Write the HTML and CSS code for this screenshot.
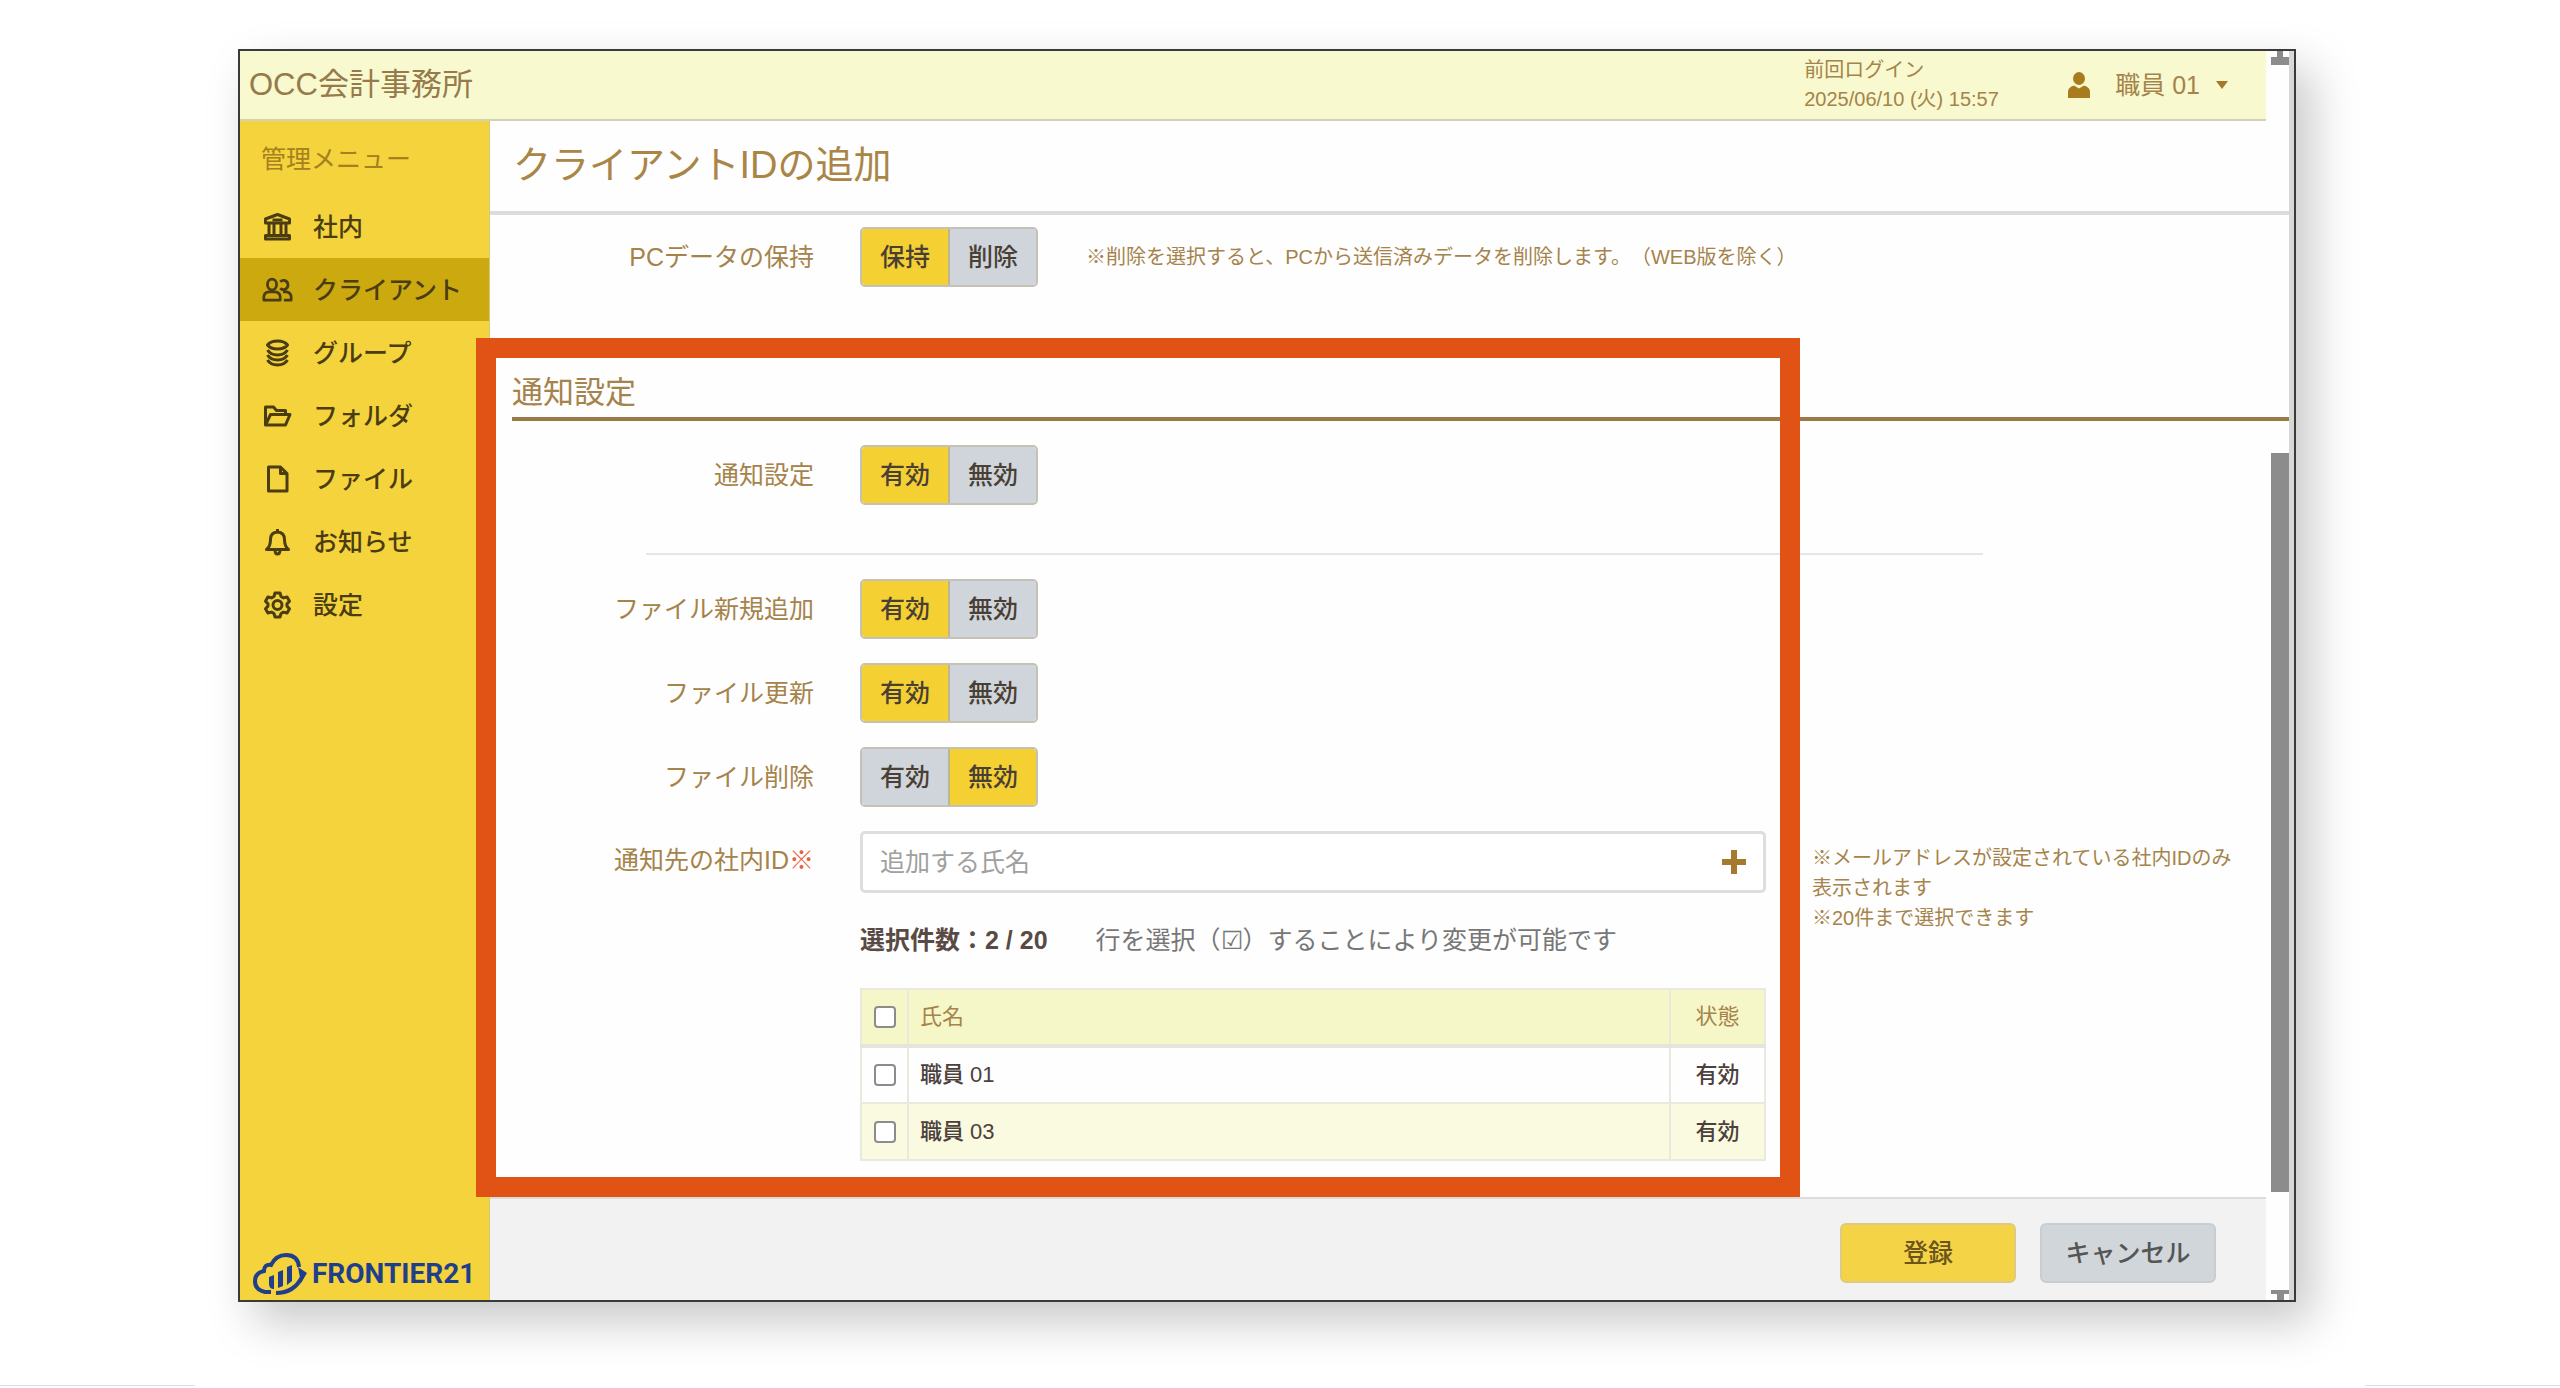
FILE: index.html
```html
<!DOCTYPE html>
<html lang="ja">
<head>
<meta charset="utf-8">
<meta name="viewport" content="width=device-width, initial-scale=1">
<title>クライアントIDの追加</title>
<link rel="stylesheet" href="styles.css">
</head>
<body>
<div class="figure">
<div class="window">
  <header class="topbar">
    <div class="office">OCC会計事務所</div>
    <div class="last-login">前回ログイン<br>2025/06/10 (火) 15:57</div>
    <button type="button" class="user">
      <svg class="user-icon" viewBox="0 0 24 26"><ellipse cx="12" cy="6.500" rx="6" ry="6.500"/><path d="M1 26v-6q0-5 6-6.500l5 3 5-3q6 1.500 6 6.500v6z"/></svg>
      <span>職員 01</span>
      <svg class="caret" viewBox="0 0 12 8"><path d="M0 0h12L6 8z"/></svg>
    </button>
  </header>
  <div class="body">
    <nav class="sidebar">
      <h2 class="menu-title">管理メニュー</h2>
      <ul class="menu">
        <li><a href="#" class="item"><svg viewBox="0 0 28 28"><path d="M14 1.500 26 6v4H2V6zM5.500 11v11M10.500 11v11M17.500 11v11M22.500 11v11M2 22.500h24v3.500H2z"/><path d="M9 7h10"/></svg>社内</a></li>
        <li><a href="#" class="item current"><svg viewBox="0 0 34 28"><ellipse cx="11" cy="8" rx="5" ry="6"/><path d="M2 25v-3q0-5 5-6h8q5 1 5 6v3zM20 5q2-2 4.500-1.500 4 1 4 5t-4 5q-2.500.5-4.500-1.500M24 25h8v-3q0-5-5-6h-4"/></svg>クライアント</a></li>
        <li><a href="#" class="item"><svg viewBox="0 0 28 28"><path d="M14 2q7 0 10 4-3 4-10 4T4 6q3-4 10-4zM4 11q3 5 10 5t10-5M4 16q3 5 10 5t10-5M4 21q3 5 10 5t10-5"/></svg>グループ</a></li>
        <li><a href="#" class="item"><svg viewBox="0 0 28 28"><path d="M2 23V5h8l3 3.500h9v4M2 23l5-10.500h19.500L22 23z"/></svg>フォルダ</a></li>
        <li><a href="#" class="item"><svg viewBox="0 0 28 28"><path d="M5 2h12l6.500 6.500V26H5zM17 2v6.500h6.500"/></svg>ファイル</a></li>
        <li><a href="#" class="item"><svg viewBox="0 0 28 28"><path d="M14 1v3M3 21.500q4-3 4-10 0-7 7-7.500 7 .5 7 7.500 0 7 4 10zM11.500 22q0 4 2.500 4t2.500-4"/></svg>お知らせ</a></li>
        <li><a href="#" class="item"><svg viewBox="0 0 28 28"><path d="M11.500 2h5l1 3.500 2.500 1.400 3.600-.9 2.400 4.300-2.500 2.600v2.200l2.500 2.600-2.400 4.300-3.600-.9-2.500 1.400-1 3.500h-5l-1-3.500-2.500-1.400-3.600.9L2 17.700l2.500-2.600v-2.200L2 10.300 4.400 6l3.600.9 2.500-1.400z"/><circle cx="14" cy="14" r="4.500"/></svg>設定</a></li>
      </ul>
      <a href="#" class="brand">
        <svg viewBox="0 0 54 42"><path class="line" d="M18 39H12Q2 37 2 28q0-8 9-10 0-7 7-6Q23 2 33 2q12 0 13 12"/><path class="line" d="M23 40q18 0 26-16"/><path d="m45 14 9 6-6 10zM16 24l5-2v14q-5 0-5-5zM25 19l5-2v16l-5 2zM34 14l5-2v16l-5 4z"/></svg>
        <span>FRONTIER21</span>
      </a>
    </nav>
    <main class="main">
      <h1 class="title">クライアントIDの追加</h1>
      <form class="form">
        <div class="row data-row">
          <span class="label">PCデータの保持</span>
          <div class="control inline">
            <div class="toggle"><button type="button" class="on">保持</button><button type="button">削除</button></div>
            <p class="note">※削除を選択すると、PCから送信済みデータを削除します。（WEB版を除く）</p>
          </div>
        </div>
        <section class="notify">
          <h2 class="section-title">通知設定</h2>
          <div class="row">
            <span class="label">通知設定</span>
            <div class="toggle"><button type="button" class="on">有効</button><button type="button">無効</button></div>
          </div>
          <hr class="rule">
          <div class="row">
            <span class="label">ファイル新規追加</span>
            <div class="toggle"><button type="button" class="on">有効</button><button type="button">無効</button></div>
          </div>
          <div class="row">
            <span class="label">ファイル更新</span>
            <div class="toggle"><button type="button" class="on">有効</button><button type="button">無効</button></div>
          </div>
          <div class="row">
            <span class="label">ファイル削除</span>
            <div class="toggle"><button type="button">有効</button><button type="button" class="on">無効</button></div>
          </div>
          <div class="row top">
            <label class="label tall" for="staff">通知先の社内ID<span class="required">※</span></label>
            <div class="control">
              <div class="picker">
                <input id="staff" type="text" placeholder="追加する氏名">
                <button type="button" class="add" aria-label="追加"><svg viewBox="0 0 24 24"><path d="M9 0h6v9h9v6h-9v9H9v-9H0V9h9z"/></svg></button>
              </div>
              <p class="summary"><strong>選択件数：2 / 20</strong><span>行を選択（☑）することにより変更が可能です</span></p>
              <table class="staff">
                <thead><tr><th class="check"><input type="checkbox" aria-label="すべて選択"></th><th>氏名</th><th class="state">状態</th></tr></thead>
                <tbody>
                  <tr><td class="check"><input type="checkbox" aria-label="職員 01"></td><td>職員 01</td><td class="state">有効</td></tr>
                  <tr><td class="check"><input type="checkbox" aria-label="職員 03"></td><td>職員 03</td><td class="state">有効</td></tr>
                </tbody>
              </table>
            </div>
            <p class="note side">※メールアドレスが設定されている社内IDのみ<br>表示されます<br>※20件まで選択できます</p>
          </div>
          <div class="highlight"></div>
        </section>
      </form>
      <footer class="actions">
        <button type="submit" class="btn primary">登録</button>
        <button type="button" class="btn">キャンセル</button>
      </footer>
    </main>
  </div>
  <div class="scrollbar">
    <svg class="arrow" viewBox="0 0 18 14"><path d="M6 0h6v6h6v8H0V6h6z"/></svg>
    <div class="track"><div class="thumb"></div></div>
    <svg class="arrow down" viewBox="0 0 18 10"><path d="M0 0h18v4h-5v6H6V4H0z"/></svg>
  </div>
</div>
</div>
</body>
</html>
```
FILE: styles.css
```css
* { box-sizing: border-box; }

body {
  margin: 0;
  background: #fff;
  color: #a5834a;
  font-family: "Liberation Sans", "Noto Sans CJK JP", sans-serif;
  font-size: 25px;
  line-height: 36px;
  text-spacing-trim: space-all;
}

h1, h2, p, ul { margin: 0; padding: 0; font-weight: 400; }
ul { list-style: none; }
button, input { font: inherit; color: inherit; margin: 0; padding: 0; }
button { border: 0; background: none; cursor: pointer; }
svg { display: block; flex: none; }

.figure {
  min-height: 100vh;
  padding: 49px 264px 0 238px;
  background:
    linear-gradient(#dedede, #dedede) left bottom 2px / 195px 1px no-repeat,
    linear-gradient(#dedede, #dedede) right bottom 2px / 195px 1px no-repeat;
}

.window {
  position: relative;
  border: 2px solid #3a3a3a;
  padding-right: 5px;
  background: linear-gradient(#d8d8d8, #d8d8d8) right / 5px 100% no-repeat #fefefe;
  box-shadow: 16px 20px 44px rgba(0, 0, 0, .22);
}

/* Top bar */
.topbar {
  display: flex;
  align-items: center;
  height: 70px;
  margin-right: 23px;
  padding: 0 38px 0 9px;
  background: #f8f9ce;
  border-bottom: 2px solid #d3d2b4;
}
.office { flex: 1; font-size: 31px; color: #967a4b; }
.last-login { width: 263px; font-size: 20px; line-height: 29px; }
.user { display: flex; align-items: center; color: #a5834a; }
.user span { margin: 0 16px 0 24px; }
.user-icon { width: 24px; height: 26px; fill: #a87c1e; }
.caret { width: 12px; height: 8px; fill: #a5792a; }

.body { display: flex; align-items: stretch; }

/* Sidebar */
.sidebar {
  display: flex;
  flex-direction: column;
  flex: none;
  width: 250px;
  background: #f5d33c;
  border-right: 1px solid #d9c777;
}
.menu-title {
  padding: 20px 22px 18px 21px;
  font-size: 25px;
  color: #a5801e;
}
.item {
  display: flex;
  align-items: center;
  gap: 20px;
  height: 63px;
  padding-left: 22px;
  color: #4b3d12;
  font-weight: 500;
  text-decoration: none;
}
.item.current { background: #cba90f; }
.item svg {
  width: 31px;
  height: 28px;
  fill: none;
  stroke: #4b3d12;
  stroke-width: 3;
  stroke-linejoin: round;
}
.brand {
  display: flex;
  align-items: center;
  gap: 5px;
  margin-top: auto;
  padding: 0 0 5px 13px;
  color: #1f3f8c;
  font-family: Roboto, sans-serif;
  font-size: 28px;
  font-weight: 700;
  line-height: 42px;
  text-decoration: none;
}
.brand svg { width: 54px; height: 42px; fill: #1f3f8c; }
.brand .line { fill: none; stroke: #1f3f8c; stroke-width: 4; }

/* Main */
.main { display: flex; flex-direction: column; flex: 1; min-width: 0; }
.title {
  height: 94px;
  padding: 22px 0 0 23px;
  border-bottom: 4px solid #dcdcdc;
  font-size: 38px;
  line-height: 44px;
  color: #a98546;
}
.form { padding: 12px 0 36px 22px; }
.row {
  display: grid;
  grid-template-columns: 302px minmax(0, 906px) minmax(0, 1fr);
  column-gap: 46px;
  align-items: center;
  margin-bottom: 24px;
}
.row.top { align-items: start; margin-bottom: 0; }
.data-row { margin-bottom: 86px; }
.label { text-align: right; }
.label.tall { line-height: 58px; }
.required { color: #e8603a; }
.inline { display: flex; align-items: center; gap: 48px; }
.note { font-size: 20px; line-height: 30px; white-space: nowrap; }
.note.side { padding-top: 12px; white-space: normal; }

.notify { position: relative; }
.section-title {
  margin-bottom: 24px;
  padding-bottom: 4px;
  border-bottom: 4px solid #9c7a48;
  font-size: 31px;
  line-height: 40px;
}
.rule {
  width: 1337px;
  max-width: 90%;
  height: 2px;
  margin: 48px 0 24px 134px;
  border: 0;
  background: #e4e7e9;
}
.highlight {
  position: absolute;
  z-index: 2;
  top: -35px;
  bottom: -36px;
  left: -36px;
  width: 1324px;
  border: 20px solid #e15215;
  pointer-events: none;
}

.toggle {
  display: flex;
  width: 178px;
  height: 60px;
  flex: none;
  overflow: hidden;
  border: 2px solid #c3c2b4;
  border-radius: 5px;
}
.toggle button {
  flex: 1;
  background: #cfd5da;
  color: #4a3f35;
  font-weight: 500;
}
.toggle button + button { border-left: 2px solid #bdb693; }
.toggle .on { background: #f5d033; }

.picker {
  display: flex;
  align-items: center;
  height: 62px;
  padding: 0 17px;
  border: 3px solid #dedede;
  border-radius: 5px;
  background: #fff;
}
.picker input { flex: 1; min-width: 0; border: 0; outline: 0; background: none; }
.picker input::placeholder { color: #a0a0a0; opacity: 1; }
.add svg { width: 24px; height: 24px; fill: #a5792e; }

.summary { display: flex; gap: 48px; padding: 29px 0 30px; color: #777; }
.summary strong { color: #5a4a45; font-weight: 700; }

.staff {
  width: 100%;
  border-collapse: collapse;
  font-size: 22px;
  line-height: 30px;
  color: #4c403c;
}
.staff th, .staff td {
  height: 57px;
  padding: 0 11px;
  border: 2px solid #e9e9df;
  text-align: left;
  font-weight: 500;
}
.staff th {
  border-bottom: 4px solid #e4e5dc;
  background: #f6f7c8;
  color: #a5834a;
  font-weight: 400;
}
.staff tbody tr:nth-child(even) { background: #fafae0; }
.staff .check { width: 47px; padding: 0; text-align: center; }
.staff .state { width: 95px; padding: 0; text-align: center; }
.staff input {
  display: block;
  width: 22px;
  height: 22px;
  margin: 0 auto;
  appearance: none;
  border: 2px solid #8c8c8c;
  border-radius: 4px;
  background: #fff;
}

/* Footer */
.actions {
  display: flex;
  justify-content: flex-end;
  gap: 24px;
  margin: auto 23px 0 0;
  padding: 24px 50px 17px 0;
  border-top: 2px solid #dcdcdc;
  background: #f2f2f2;
}
.btn {
  width: 176px;
  height: 60px;
  border: 2px solid #c9cdd0;
  border-radius: 6px;
  background: #d1d6da;
  color: #555;
  font-weight: 500;
}
.btn.primary { background: #f5d347; border-color: #dccb80; color: #6b551c; }

/* Scrollbar */
.scrollbar {
  position: absolute;
  top: 0;
  right: 5px;
  bottom: 0;
  display: flex;
  flex-direction: column;
  width: 18px;
}
.arrow { width: 18px; height: 14px; fill: #8c8c8c; }
.arrow.down { height: 10px; }
.track { flex: 1; padding: 388px 0 98px; }
.thumb { height: 100%; background: #8c8c8c; }
```
